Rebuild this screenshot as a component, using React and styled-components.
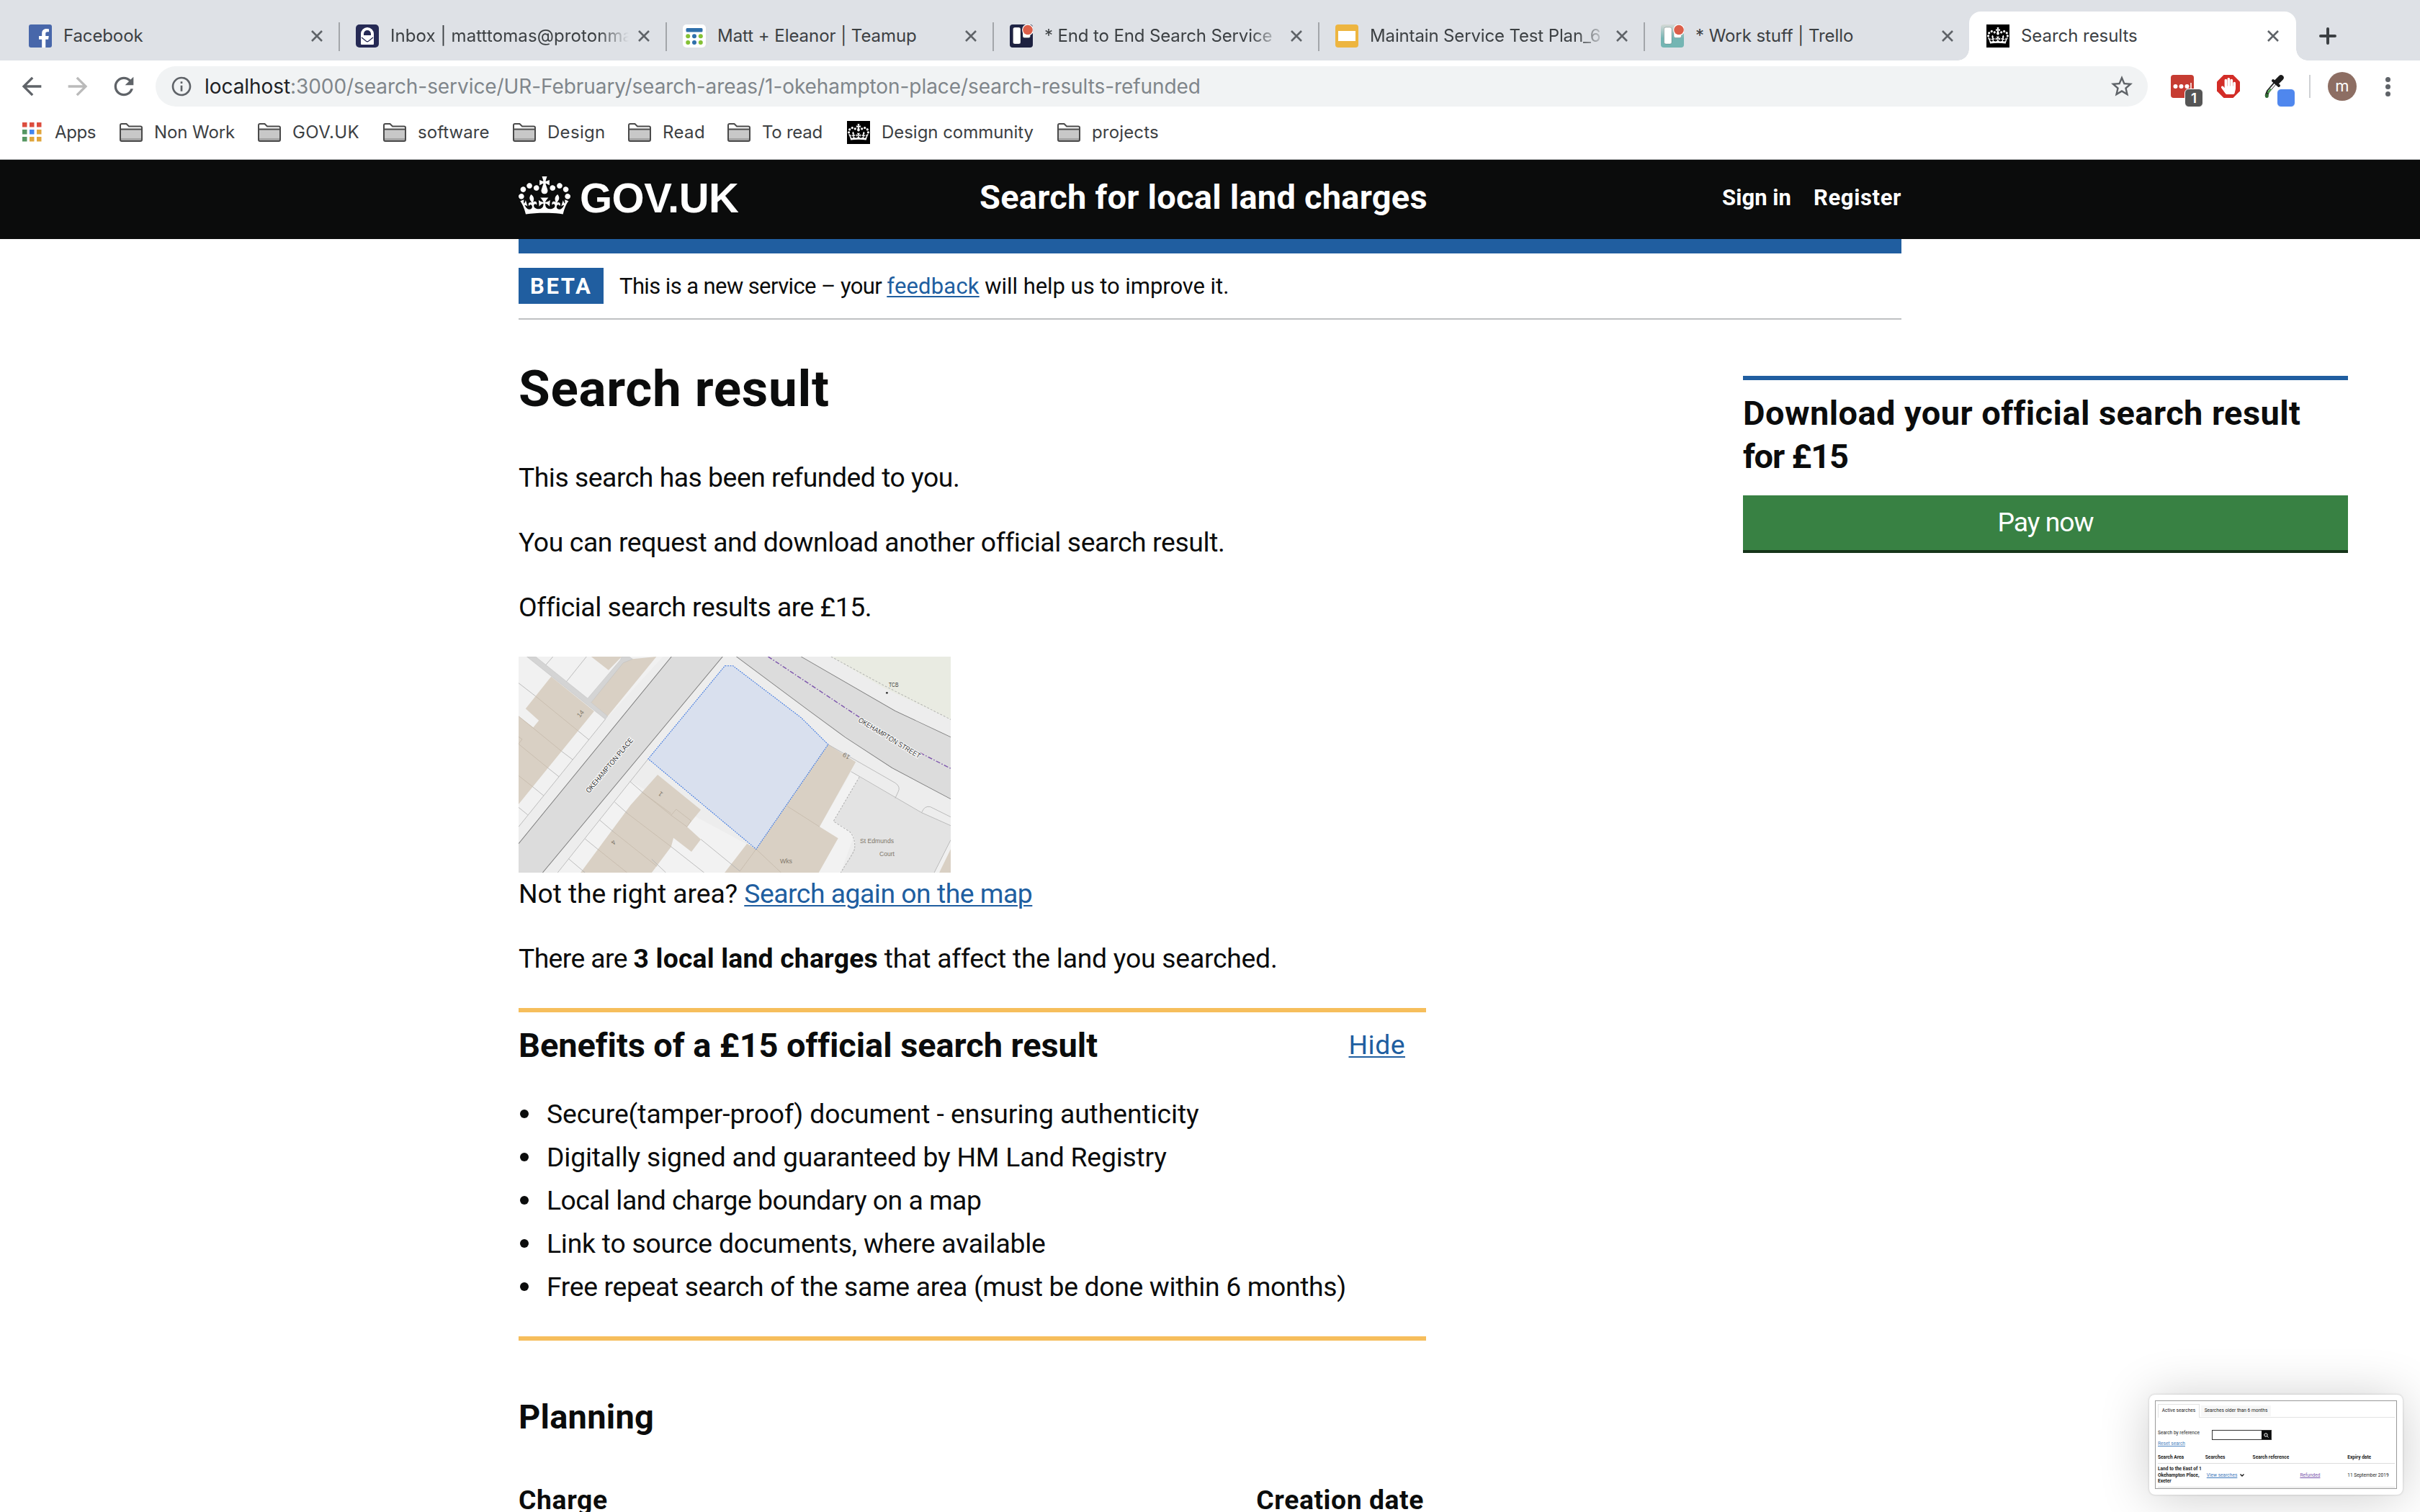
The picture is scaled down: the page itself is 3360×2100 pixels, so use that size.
import React from "react";
import styled, { createGlobalStyle, css } from "styled-components";
import { FaFacebookF, FaHandPaper } from "react-icons/fa";
import { MdArrowBack, MdArrowForward, MdRefresh, MdInfoOutline, MdStarBorder } from "react-icons/md";

const ui = `Inter, "Liberation Sans", sans-serif`;
const transport = `Roboto, "Liberation Sans", sans-serif`;
const ink = "#0b0c0c";
const blue = "#205ea0";

const GlobalStyle = createGlobalStyle`
  html, body { margin: 0; background: #fff; }
  * { box-sizing: border-box; }
  svg { display: block; flex: none; }
`;

const Screen = styled.div`
  position: relative;
  width: 3360px;
  height: 2100px;
  overflow: hidden;
  background: #fff;
`;

/* ---------- browser window ---------- */
const TabStrip = styled.div`
  display: flex;
  align-items: flex-end;
  height: 84px;
  padding-left: 16px;
  background: #dee1e6;
`;

const Tab = styled.div`
  position: relative;
  display: flex;
  align-items: center;
  width: ${(p) => p.$width}px;
  height: 68px;
  padding: 0 ${(p) => (p.$active ? 24 : 22)}px 0 24px;
  border-radius: 16px 16px 0 0;
  ${(p) =>
    p.$divided &&
    css`
      &::before {
        content: "";
        position: absolute;
        left: 0;
        top: 15px;
        width: 2px;
        height: 40px;
        background: #a3a6aa;
      }
    `}
  ${(p) =>
    p.$active &&
    css`
      background: #fff;
      &::before,
      &::after {
        content: "";
        position: absolute;
        bottom: 0;
        width: 16px;
        height: 16px;
      }
      &::before {
        left: -16px;
        background: radial-gradient(circle at 0 0, transparent 15.5px, #fff 16px);
      }
      &::after {
        right: -16px;
        background: radial-gradient(circle at 100% 0, transparent 15.5px, #fff 16px);
      }
    `}
`;

const TabTitle = styled.span`
  flex: 1;
  min-width: 0;
  margin: 0 13px 0 16px;
  overflow: hidden;
  white-space: nowrap;
  font: 400 24px/36px ${ui};
  letter-spacing: ${(p) => p.$ls || 0}px;
  color: #3c4043;
  ${(p) => p.$fade && css`mask-image: linear-gradient(90deg, #000 calc(100% - 42px), transparent);`}
`;

const NewTab = styled.div`
  display: flex;
  align-items: center;
  height: 68px;
  margin-left: 32px;
`;

const Toolbar = styled.div`
  display: flex;
  align-items: center;
  height: 72px;
  padding-left: 24px;
  color: #5f6368;
`;

const NavButton = styled.div`
  display: flex;
  width: 40px;
  height: 40px;
  margin-right: 24px;
  font-size: 40px;
  color: ${(p) => (p.$disabled ? "#bababa" : "#5f6368")};
`;

const AddressBar = styled.div`
  display: flex;
  align-items: center;
  width: 2766px;
  height: 56px;
  padding: 0 18px 0 20px;
  border-radius: 28px;
  background: #f1f3f4;
`;

const Url = styled.div`
  flex: 1;
  margin-left: 16px;
  font: 400 28px/40px ${ui};
  letter-spacing: -0.07px;
  color: #80868b;
  white-space: nowrap;
`;

const UrlHost = styled.span`
  color: #202124;
`;

const Extension = styled.div`
  position: relative;
  width: 32px;
  height: 32px;
  margin-left: 32px;
`;

const ExtensionBadge = styled.div`
  position: absolute;
  left: ${(p) => p.$left}px;
  top: 19px;
  width: 26px;
  height: 26px;
  border: 1px solid #fff;
  border-radius: 6px;
  background: ${(p) => p.$color};
  font: 600 19px/25px ${ui};
  text-align: center;
  color: #fff;
`;

const ToolDivider = styled.div`
  width: 2px;
  height: 32px;
  margin: 0 24px 0 32px;
  background: #cfd1d4;
`;

const Avatar = styled.div`
  width: 40px;
  height: 40px;
  border-radius: 50%;
  background: #8d6e63;
  font: 400 22px/38px ${ui};
  text-align: center;
  color: #fff;
`;

const MenuDots = styled.div`
  display: flex;
  flex-direction: column;
  gap: 3px;
  margin-left: 40px;
`;

const Dot = styled.i`
  width: 7px;
  height: 7px;
  border-radius: 50%;
  background: #5f6368;
`;

const BookmarkBar = styled.div`
  display: flex;
  align-items: center;
  height: 65px;
  padding: 0 0 9px 28px;
`;

const BookmarkItem = styled.div`
  display: flex;
  align-items: center;
  width: ${(p) => p.$width}px;
  gap: 16px;
  font: 400 24px/36px ${ui};
  letter-spacing: ${(p) => p.$ls || 0}px;
  color: #3c4043;
  white-space: nowrap;
`;

/* ---------- page ---------- */
const Header = styled.header`
  display: flex;
  justify-content: center;
  height: 111px;
  border-top: 1px solid #b5b7b9;
  background: ${ink};
`;

const HeaderInner = styled.div`
  display: flex;
  width: 1920px;
  color: #fff;
  white-space: nowrap;
`;

const Brand = styled.div`
  display: flex;
  width: 640px;
  padding-top: 23px;
  gap: 13px;
`;

const BrandName = styled.span`
  font: 700 58px/60px "Liberation Sans", Arial, sans-serif;
  letter-spacing: -0.5px;
`;

const ServiceName = styled.span`
  margin-top: 22px;
  font: 700 47px/60px ${transport};
  letter-spacing: 0.24px;
`;

const HeaderNav = styled.nav`
  display: flex;
  gap: 31px;
  margin: 33px 0 0 auto;
  font: 700 31px/40px ${transport};
`;

const HeaderLink = styled.span`
  letter-spacing: ${(p) => p.$ls}px;
`;

const Container = styled.div`
  width: 1920px;
  margin: 0 auto;
`;

const PhaseBanner = styled.div`
  display: flex;
  height: 112px;
  padding: 20px 0;
  border-top: 20px solid ${blue};
  border-bottom: 2px solid #bfc1c3;
  font: 400 31px/51px ${transport};
  color: ${ink};
  white-space: nowrap;
`;

const PhaseTag = styled.strong`
  width: 118px;
  height: 50px;
  margin-right: 22px;
  padding-left: 16px;
  background: ${blue};
  color: #fff;
  font-weight: 700;
  letter-spacing: 2.63px;
`;

const Spaced = styled.span`
  letter-spacing: ${(p) => p.$ls}px;
`;

const Strong = styled.strong`
  font-weight: 700;
  letter-spacing: ${(p) => p.$ls}px;
`;

const Link = styled.a`
  color: ${blue};
  letter-spacing: ${(p) => p.$ls}px;
  text-decoration: underline;
  text-decoration-thickness: 2px;
  text-underline-offset: 3px;
`;

const Columns = styled.div`
  display: flex;
  gap: 440px;
  padding-top: 56px;
`;

const Main = styled.main`
  flex: none;
  width: 1260px;
  color: ${ink};
  font: 400 37.3px/60px ${transport};
  white-space: nowrap;
`;

const PageTitle = styled.h1`
  margin: 0 0 53px;
  font: 700 71px/80px ${transport};
  letter-spacing: 0.71px;
`;

const Paragraph = styled.p`
  margin: 0 0 30px;
  letter-spacing: ${(p) => p.$ls || 0}px;
`;

const MapFigure = styled.div`
  width: 600px;
  height: 300px;
  margin: 39px 0 -1px;
  overflow: hidden;
`;

const Benefits = styled.section`
  height: 462px;
  margin-top: 39px;
  padding-top: 16px;
  border-top: 6px solid #f6be5c;
  border-bottom: 6px solid #f6be5c;
`;

const BenefitsHead = styled.div`
  display: flex;
  justify-content: space-between;
  padding-right: 29px;
`;

const Heading2 = styled.h2`
  margin: 0;
  font: 700 47px/60px ${transport};
  letter-spacing: ${(p) => p.$ls}px;
`;

const HideLink = styled(Link)`
  position: relative;
  top: -1px;
`;

const BenefitList = styled.ul`
  margin: 35px 0 0;
  padding: 0;
  list-style: none;
`;

const Benefit = styled.li`
  display: flex;
  align-items: center;
  gap: 25px;
  height: 60px;
  padding-left: 2px;
  letter-spacing: ${(p) => p.$ls}px;
  &::before {
    content: "";
    width: 12px;
    height: 12px;
    border-radius: 50%;
    background: ${ink};
  }
`;

const PlanningTitle = styled(Heading2)`
  margin-top: 76px;
`;

const TableHead = styled.div`
  display: flex;
  justify-content: space-between;
  margin-top: 55px;
  padding-right: 3px;
  font-weight: 700;
`;

const Aside = styled.aside`
  flex: none;
  width: 840px;
  margin-top: 22px;
  padding-top: 16px;
  border-top: 6px solid ${blue};
  align-self: flex-start;
  color: ${ink};
`;

const PayButton = styled.button`
  display: block;
  width: 100%;
  height: 80px;
  margin-top: 24px;
  padding: 0 0 1px;
  border: 0;
  border-bottom: 4px solid #153419;
  background: #388143;
  color: #fff;
  font: 400 37.3px/75px ${transport};
  letter-spacing: -1px;
`;

/* ---------- floating preview ---------- */
const Preview = styled.div`
  position: absolute;
  left: 2984px;
  top: 1937px;
  width: 352px;
  height: 139px;
  padding: 8px;
  border-radius: 8px;
  background: #fff;
  box-shadow: 0 0 3px rgba(0, 0, 0, 0.22), 0 4px 70px rgba(0, 0, 0, 0.2);
`;

const PreviewFrame = styled.div`
  height: 123px;
  padding: 4px 2px 0 3px;
  border: 1px solid #999;
  font: 400 6.6px/9px ${transport};
  color: #222;
  white-space: nowrap;
`;

const PreviewTabs = styled.div`
  display: flex;
  align-items: flex-end;
  gap: 2px;
  height: 19px;
  border-bottom: 1px solid #e3e3e3;
`;

const PreviewTab = styled.div`
  width: ${(p) => p.$width}px;
  height: ${(p) => (p.$current ? 19 : 15)}px;
  margin-bottom: ${(p) => (p.$current ? -1 : 1)}px;
  padding-top: ${(p) => (p.$current ? 4 : 3)}px;
  text-align: center;
  background: ${(p) => (p.$current ? "#fff" : "#f7f7f7")};
  border: ${(p) => (p.$current ? "1px solid #e3e3e3" : "0")};
  border-bottom: 0;
`;

const PreviewSearch = styled.div`
  display: flex;
  height: 15px;
  margin-top: 17px;
`;

const PreviewLabel = styled.span`
  width: 75px;
`;

const PreviewInput = styled.span`
  display: flex;
  justify-content: flex-end;
  width: 83px;
  height: 14px;
  border: 1px solid #333;
`;

const PreviewSearchButton = styled.span`
  display: flex;
  align-items: center;
  justify-content: center;
  width: 13px;
  background: ${ink};
`;

const PreviewReset = styled.div`
  color: #4a82c0;
  text-decoration: underline;
`;

const PreviewRow = styled.div`
  display: grid;
  grid-template-columns: repeat(5, 65.8px);
  align-items: center;
  height: ${(p) => p.$height}px;
  margin-top: ${(p) => p.$top || 0}px;
  border-bottom: 1px solid #ddd;
  font-weight: ${(p) => (p.$head ? 700 : 400)};
`;

const PreviewArea = styled.strong`
  line-height: 8.6px;
  white-space: pre-line;
`;

const PreviewLink = styled.span`
  display: flex;
  align-items: center;
  gap: 4px;
  color: ${(p) => p.$color};
  padding-left: ${(p) => p.$indent || 0}px;
  text-decoration: underline;
`;

/* ---------- icons ---------- */
const CROWN =
  "M25 30.2c3.5 1.5 7.7-.2 9.1-3.7 1.5-3.6-.2-7.8-3.9-9.2-3.6-1.4-7.6.3-9.1 3.9-1.4 3.5.3 7.5 3.9 9zM9 39.5c3.6 1.5 7.8-.2 9.2-3.7 1.5-3.6-.2-7.8-3.9-9.1-3.6-1.5-7.6.2-9.1 3.8-1.4 3.5.3 7.5 3.8 9zM4.4 57.2c3.5 1.5 7.7-.2 9.1-3.8 1.5-3.6-.2-7.7-3.9-9.1-3.5-1.5-7.6.3-9.1 3.8-1.4 3.5.3 7.6 3.9 9.1zm38.3-21.4c3.5 1.5 7.7-.2 9.1-3.8 1.5-3.6-.2-7.7-3.9-9.1-3.6-1.5-7.6.3-9.1 3.8-1.3 3.6.4 7.7 3.9 9.1zm64.4-5.6c-3.6 1.5-7.8-.2-9.1-3.7-1.5-3.6.2-7.8 3.8-9.2 3.6-1.4 7.7.3 9.2 3.9 1.3 3.5-.4 7.5-3.9 9zm15.9 9.3c-3.6 1.5-7.7-.2-9.1-3.7-1.5-3.6.2-7.8 3.7-9.1 3.6-1.5 7.7.2 9.2 3.8 1.5 3.5-.3 7.5-3.8 9zm4.7 17.7c-3.6 1.5-7.8-.2-9.2-3.8-1.5-3.6.2-7.7 3.9-9.1 3.6-1.5 7.7.3 9.2 3.8 1.3 3.5-.4 7.6-3.9 9.1zM89.3 35.8c-3.6 1.5-7.8-.2-9.2-3.8-1.4-3.6.2-7.7 3.9-9.1 3.6-1.5 7.7.3 9.2 3.8 1.4 3.6-.3 7.7-3.9 9.1zM69.7 17.7l8.9 4.7V9.3l-8.9 2.8c-.2-.3-.5-.6-.9-.9L72.4 0H59.6l3.5 11.2c-.3.3-.6.5-.9.9l-8.8-2.8v13.1l8.8-4.7c.3.3.6.7.9.9l-5 15.4v.1c-.2.8-.4 1.6-.4 2.4 0 4.1 3.1 7.5 7 8.1h.2c.3 0 .7.1 1 .1.4 0 .7 0 1-.1h.2c4-.6 7.1-4.1 7.1-8.1 0-.8-.1-1.7-.4-2.4V34l-5.1-15.4c.4-.2.7-.6 1-.9zM66 92.8c16.9 0 32.8 1.1 47.1 3.2 4-16.9 8.9-26.7 14-33.5l-9.6-3.4c1 4.9 1.1 7.2 0 10.2-1.5-1.4-3-4.3-4.2-8.7L108.6 76c2.8-2 5-3.2 7.5-3.3-4.4 9.4-10 11.9-13.6 11.2-4.3-.8-6.3-4.6-5.6-7.9 1-4.7 5.7-5.9 8-.5 4.3-8.7-3-11.4-7.6-8.8 7.1-7.2 7.9-13.5 2.1-21.1-8 6.1-8.1 12.3-4.5 20.8-4.7-5.4-12.1-2.5-9.5 6.2 3.4-5.2 7.9-2 7.2 3.1-.6 4.3-6.4 7.8-13.5 7.2-10.3-.9-10.9-8-11.2-13.8 2.5-.5 7.1 1.8 11 7.3L80.2 60c-4.1 4.4-8 5.3-12.3 5.4 1.4-4.4 8-11.6 8-11.6H55.5s6.4 7.2 7.9 11.6c-4.2-.1-8-1-12.3-5.4l1.4 16.4c3.9-5.5 8.5-7.7 10.9-7.3-.3 5.8-.9 12.8-11.1 13.8-7.2.6-12.9-2.9-13.5-7.2-.7-5 3.8-8.3 7.1-3.1 2.7-8.7-4.6-11.6-9.4-6.2 3.7-8.5 3.6-14.7-4.6-20.8-5.8 7.6-5 13.9 2.2 21.1-4.7-2.6-11.9.1-7.7 8.8 2.3-5.5 7.1-4.2 8.1.5.7 3.3-1.3 7.1-5.7 7.9-3.5.7-9-1.8-13.5-11.2 2.5.1 4.7 1.3 7.5 3.3l-4.7-15.4c-1.2 4.4-2.7 7.2-4.3 8.7-1.1-3-.9-5.3 0-10.2l-9.5 3.4c5 6.9 9.9 16.7 14 33.5 14.8-2.1 30.8-3.2 47.7-3.2z";

const CrownIcon = () => (
  <svg width="72" height="53" viewBox="0 0 132 97" fill="#fff">
    <path d={CROWN} />
  </svg>
);

const CrownTile = () => (
  <svg width="32" height="32" viewBox="0 0 32 32">
    <rect width="32" height="32" fill="#000" />
    <g transform="translate(1 4) scale(.227 .235)" fill="#fff">
      <path d={CROWN} />
    </g>
  </svg>
);

const FacebookTile = () => (
  <svg width="32" height="32" viewBox="0 0 32 32">
    <rect width="32" height="32" rx="3" fill="#4867aa" />
    <FaFacebookF x="8" y="6" size={26} color="#fff" />
  </svg>
);

const ProtonTile = () => (
  <svg width="32" height="32" viewBox="0 0 32 32">
    <rect width="32" height="32" rx="5" fill="#262a55" />
    <path d="M7 27V13a9 9 0 0 1 18 0v14a1 1 0 0 1-1 1H8a1 1 0 0 1-1-1z" fill="#fff" />
    <path d="M11 15v-2a5 5 0 0 1 10 0v2z" fill="#262a55" />
    <path d="M8 18l6.500 5.200a2.500 2.500 0 0 0 3 0L24 18" fill="none" stroke="#262a55" strokeWidth="1.300" />
  </svg>
);

const TeamupTile = () => (
  <svg width="32" height="32" viewBox="0 0 32 32">
    <rect width="32" height="32" rx="5" fill="#fff" />
    <rect x="4.500" y="5" width="23" height="5.500" rx="1.500" fill="#2f70ab" />
    {[7.2, 16, 24.8].map((x, i) =>
      [16.300, 25].map((y) => <circle key={x + y} cx={x} cy={y} r="3" fill={i === 1 ? "#2f70ab" : "#84c135"} />)
    )}
  </svg>
);

const TrelloTile = ({ sky, ground }) => (
  <svg width="32" height="32" viewBox="0 0 32 32">
    <defs>
      <linearGradient id={"board" + ground.slice(1)} x1="0" y1="0" x2="0" y2="1">
        <stop offset="0" stopColor={sky} />
        <stop offset="0.6" stopColor={ground} />
      </linearGradient>
    </defs>
    <rect width="32" height="32" rx="4" fill={`url(#board${ground.slice(1)})`} />
    <rect x="4.500" y="4" width="10.500" height="23" rx="2.500" fill="#fff" stroke="#0003" />
    <rect x="18" y="4" width="10.500" height="14.500" rx="2.500" fill="#fff" stroke="#0003" />
    <circle cx="25" cy="7.500" r="8" fill="#fff" />
    <circle cx="25" cy="7.500" r="6.800" fill="#dc5f4a" />
  </svg>
);

const SlidesTile = () => (
  <svg width="32" height="32" viewBox="0 0 32 32">
    <rect width="32" height="32" rx="4" fill="#edb540" />
    <rect x="4" y="9" width="24" height="14" fill="#fff" />
  </svg>
);

const CloseIcon = () => (
  <svg width="16" height="16" viewBox="0 0 16 16" stroke="#5f6368" strokeWidth="2.600">
    <path d="M1 1l14 14M15 1L1 15" />
  </svg>
);

const PlusIcon = () => (
  <svg width="24" height="24" viewBox="0 0 24 24" stroke="#3c4043" strokeWidth="4" strokeLinecap="round">
    <path d="M12 2v20M2 12h20" />
  </svg>
);

const FolderIcon = () => (
  <svg width="32" height="26" viewBox="0 0 32 26">
    <path d="M1 23V3a2 2 0 0 1 2-2h6.500l3.500 3.500H29a2 2 0 0 1 2 2V23a2 2 0 0 1-2 2H3a2 2 0 0 1-2-2z" fill="#fff" />
    <path d="M2 9h28v15H2z" fill="#c8c8c8" />
    <path d="M2 21h28v3H2z" fill="#a5a5a5" />
    <path d="M1 8.500h30" stroke="#4a4a4a" strokeWidth="2" />
    <path
      d="M1 23V3a2 2 0 0 1 2-2h6.500l3.500 3.500H29a2 2 0 0 1 2 2V23a2 2 0 0 1-2 2H3a2 2 0 0 1-2-2z"
      fill="none" stroke="#4a4a4a" strokeWidth="2"
    />
  </svg>
);

const APP_COLORS = ["#dc4d3e", "#dc4d3e", "#dc4d3e", "#559662", "#4285f0", "#e0a53c", "#559662", "#e0a53c", "#e0a53c"];
const AppsIcon = () => (
  <svg width="32" height="32" viewBox="0 0 32 32">
    {APP_COLORS.map((c, i) => (
      <rect key={i} x={3 + (i % 3) * 10} y={2 + Math.floor(i / 3) * 10} width="6.500" height="6.500" fill={c} />
    ))}
  </svg>
);

const PasswordIcon = () => (
  <svg width="32" height="32" viewBox="0 0 32 32">
    <rect width="32" height="32" rx="4" fill="#c63c32" />
    <circle cx="6.500" cy="16" r="3" fill="#fff" />
    <circle cx="14.500" cy="16" r="3" fill="#fff" />
    <circle cx="22.500" cy="16" r="3" fill="#fff" />
    <path d="M28 11v10" stroke="#fff" strokeWidth="1.500" />
  </svg>
);

const BlockerIcon = () => (
  <svg width="32" height="32" viewBox="0 0 32 32">
    <path d="M9.500 0h13L32 9.500v13L22.500 32h-13L0 22.500v-13z" fill="#d32d27" />
    <FaHandPaper x="4.500" y="4" size={23} color="#fff" />
  </svg>
);

const DropperIcon = () => (
  <svg width="32" height="32" viewBox="0 0 32 32">
    <path d="M18 10L7 23l-2 5" stroke="#222" strokeWidth="4.500" fill="none" strokeLinecap="round" />
    <path d="M17.500 11.500L7.500 23" stroke="#fff" strokeWidth="2" />
    <path d="M11 19.500L6.500 25" stroke="#4aa04a" strokeWidth="2.500" />
    <ellipse cx="5.300" cy="29" rx="2.500" ry="3" fill="#2f6a33" />
    <path d="M14 8l8 7" stroke="#1b1b1b" strokeWidth="4" strokeLinecap="round" />
    <path d="M19.500 9.500L25 4" stroke="#1b1b1b" strokeWidth="7.500" strokeLinecap="round" />
  </svg>
);

const AreaMap = () => (
  <svg width="600" height="300" viewBox="0 0 600 300">
    <rect width="600" height="300" fill="#ededed" />
    <g transform="scale(.40816 .33333) translate(-49 -36)" fill="none" stroke="none">
      <path d="M49 36H540L345 298 49 745z" fill="#f1f1f1" />
      <path d="M428 556L860 840 1070 936H180z M1200 475L1180 515 1208 538 1120 722 1190 780 1145 936H1060L1136 793 1073 745z" fill="#f2f2f2" />
      <path d="M1112 36H1519V298L1290 165z" fill="#e9ebe2" />
      <path d="M569 36H743L131 936H49V815z" fill="#dcdcdc" />
      <path d="M790 36H1010L1330 262 1519 371V629L1320 500 1160 372 1030 255z" fill="#dcdcdc" />
      <path d="M160 119L306 263 49 651V284L99 331 118 302 73 253z M296 36H400L355 92z M437 46L518 36 352 284 296 227 400 60z" fill="#d9d0c4" />
      <path d="M77 36H107L284 210 395 50 400 36H425L437 46 405 62 296 227 352 284 344 297z" fill="#d4d4d4" stroke="#b3b3b3" />
      <path d="M1519 800V936H1463z" fill="#f0f0f0" />
      <path d="M1519 838V936H1480z" fill="#d9d0c4" />
      <path d="M522 528L669 674 622 745 669 797 637 849 576 791 568 828 502 936H260L430 655z" fill="#d9d0c4" />
      <path d="M1102 402L1196 475 1073 745 1136 793 1070 936H750L826 815 857 838z" fill="#d9d0c4" />
      <path d="M1208 538L1420 686 1519 740V800L1463 936H1145C1180 860 1195 840 1194 812 1192 770 1175 758 1120 722z" fill="#e3e3e3" />
      <path d="M569 36L49 815M743 36L131 936M790 36L1030 255 1160 372 1320 500 1519 629M1010 36L1330 262 1519 371" stroke="#7d7d7d" strokeWidth="2.500" />
      <g stroke="#b0b0b0" strokeWidth="2.200">
        <path d="M344 297L49 745M490 462L182 936M166 36L142 70M280 36L212 140M49 146L106 200M252 346L289 383M196 431L233 465M149 500L186 536M97 578L134 615M49 664L80 695M428 556L473 604M376 642L420 690M325 717L372 766M275 795L320 840M219 878L275 936M568 828L680 936M502 880L550 936M669 797L802 930M1102 402L1330 562Q1350 578 1340 600L1330 626M1180 515L1420 686 1519 740M1420 686Q1430 655 1450 662L1519 704M1519 800L1463 936" />
      </g>
      <g stroke="#c3b7a8" strokeWidth="2">
        <path d="M106 200L252 346M49 284L196 431M49 400L149 500M49 532L97 578M473 604L568 690M473 604L568 697M420 690L568 828M372 766L520 910M320 840L418 936M568 697L585 672 636 720 622 745z M964 660L1073 745M857 838L942 936M857 838L802 930M49 370L61 380 49 400" />
      </g>
      <path d="M1112 36L1290 155 1519 298M1208 538L1120 722 1175 765C1195 790 1195 830 1190 845 1180 870 1160 905 1145 936" stroke="#adadad" strokeWidth="2.500" strokeDasharray="7 6" />
      <path d="M898 36L1208 288M1415 437L1519 502" stroke="#7d55ad" strokeWidth="4" strokeDasharray="16 6 4 6" />
      <path d="M751 74H778L1010 290 1102 402 857 838 490 462z" fill="#d9e0ee" stroke="#3e78e0" strokeWidth="3" strokeDasharray="5 3.500" />
      <ellipse cx="1302" cy="187" rx="3.500" ry="4" fill="#333" />
    </g>
    <g fontFamily='"Liberation Sans", sans-serif' fontSize="9" fill="#80776a" stroke="none">
      <text transform="translate(98 190) rotate(-50)" fontSize="10" fill="#333" stroke="#fff" strokeWidth="2" paintOrder="stroke" textLength="96" lengthAdjust="spacingAndGlyphs">OKEHAMPTON PLACE</text>
      <text transform="translate(471 90) rotate(31.400)" fontSize="10" fill="#333" stroke="#fff" strokeWidth="2" paintOrder="stroke" textLength="99" lengthAdjust="spacingAndGlyphs">OKEHAMPTON STREET</text>
      <text x="514" y="41.500" fontSize="8.500" fill="#444" textLength="13.500" lengthAdjust="spacingAndGlyphs">TCB</text>
      <text x="474" y="258.500" textLength="47" lengthAdjust="spacingAndGlyphs">St Edmunds</text>
      <text x="501" y="276.500" textLength="21" lengthAdjust="spacingAndGlyphs">Court</text>
      <text x="363" y="286.500" textLength="17" lengthAdjust="spacingAndGlyphs">Wks</text>
      <text transform="translate(85 85) rotate(-50)">14</text>
      <text transform="translate(461 138) rotate(212)">19</text>
      <text transform="translate(201 190) rotate(-140)">1</text>
      <text transform="translate(131 254) rotate(130)">4</text>
    </g>
  </svg>
);

/* ---------- data ---------- */
const TABS = [
  { title: "Facebook", icon: <FacebookTile />, width: 454, ls: -0.12 },
  { title: "Inbox | matttomas@protonmail.com", icon: <ProtonTile />, width: 454, ls: 0.1, divided: true, fade: true },
  { title: "Matt + Eleanor | Teamup", icon: <TeamupTile />, width: 454, ls: -0.05, divided: true },
  { title: "* End to End Search Service", icon: <TrelloTile sky="#1f2547" ground="#1d2140" />, width: 452, ls: -0.13, divided: true, fade: true },
  { title: "Maintain Service Test Plan_6", icon: <SlidesTile />, width: 452, ls: -0.14, divided: true, fade: true },
  { title: "* Work stuff | Trello", icon: <TrelloTile sky="#d5d9d6" ground="#74b5b3" />, width: 452, ls: -0.07, divided: true },
  { title: "Search results", icon: <CrownTile />, width: 454, ls: -0.05, active: true },
];

const BOOKMARKS = [
  { label: "Apps", icon: <AppsIcon />, width: 138, ls: -0.4 },
  { label: "Non Work", width: 192, ls: -0.09 },
  { label: "GOV.UK", width: 174, ls: 0.41 },
  { label: "software", width: 180, ls: 0.06 },
  { label: "Design", width: 160, ls: 0.3 },
  { label: "Read", width: 138, ls: 0.4 },
  { label: "To read", width: 166, ls: -0.27 },
  { label: "Design community", icon: <CrownTile />, width: 292, ls: -0.04 },
  { label: "projects", width: 150, ls: 0.16 },
];

const BENEFITS = [
  ["Secure(tamper-proof) document - ensuring authenticity", -0.08],
  ["Digitally signed and guaranteed by HM Land Registry", -0.2],
  ["Local land charge boundary on a map", -0.52],
  ["Link to source documents, where available", -0.22],
  ["Free repeat search of the same area (must be done within 6 months)", -0.34],
];

function Browser() {
  return (
    <>
      <TabStrip>
        {TABS.map((t) => (
          <Tab key={t.title} $width={t.width} $divided={t.divided} $active={t.active}>
            {t.icon}
            <TabTitle $ls={t.ls} $fade={t.fade}>{t.title}</TabTitle>
            <CloseIcon />
          </Tab>
        ))}
        <NewTab><PlusIcon /></NewTab>
      </TabStrip>
      <Toolbar>
        <NavButton><MdArrowBack /></NavButton>
        <NavButton $disabled><MdArrowForward /></NavButton>
        <NavButton><MdRefresh /></NavButton>
        <AddressBar>
          <MdInfoOutline size={32} />
          <Url><UrlHost>localhost</UrlHost>:3000/search-service/UR-February/search-areas/1-okehampton-place/search-results-refunded</Url>
          <MdStarBorder size={36} />
        </AddressBar>
        <Extension><PasswordIcon /><ExtensionBadge $left={19} $color="#555">1</ExtensionBadge></Extension>
        <Extension><BlockerIcon /></Extension>
        <Extension><DropperIcon /><ExtensionBadge $left={19} $color="#4f87ee" /></Extension>
        <ToolDivider />
        <Avatar>m</Avatar>
        <MenuDots><Dot /><Dot /><Dot /></MenuDots>
      </Toolbar>
      <BookmarkBar>
        {BOOKMARKS.map((b) => (
          <BookmarkItem key={b.label} $width={b.width} $ls={b.ls}>
            {b.icon || <FolderIcon />}
            {b.label}
          </BookmarkItem>
        ))}
      </BookmarkBar>
    </>
  );
}

function SearchPreview() {
  return (
    <Preview>
      <PreviewFrame>
        <PreviewTabs>
          <PreviewTab $current $width={58}>Active searches</PreviewTab>
          <PreviewTab $width={97}>Searches older than 6 months</PreviewTab>
        </PreviewTabs>
        <PreviewSearch>
          <PreviewLabel>Search by reference</PreviewLabel>
          <PreviewInput>
            <PreviewSearchButton>
              <svg width="7" height="7" viewBox="0 0 7 7" fill="none" stroke="#fff">
                <circle cx="3" cy="3" r="2.200" />
                <path d="M4.600 4.600L6.500 6.500" />
              </svg>
            </PreviewSearchButton>
          </PreviewInput>
        </PreviewSearch>
        <PreviewReset>Reset search</PreviewReset>
        <PreviewRow $head $height={17} $top={6}>
          <span>Search Area</span>
          <span>Searches</span>
          <span>Search reference</span>
          <span />
          <span>Expiry date</span>
        </PreviewRow>
        <PreviewRow $height={33}>
          <PreviewArea>{"Land to the East of 1\nOkehampton Place,\nExeter"}</PreviewArea>
          <PreviewLink $color="#3f7abb" $indent={2}>
            View searches
            <svg width="6" height="4" viewBox="0 0 6 4" fill="none" stroke="#111" strokeWidth="1.300">
              <path d="M.5.500L3 3 5.500.500" />
            </svg>
          </PreviewLink>
          <span />
          <PreviewLink $color="#7a55ab">Refunded</PreviewLink>
          <span>11 September 2019</span>
        </PreviewRow>
      </PreviewFrame>
    </Preview>
  );
}

export default function App() {
  return (
    <Screen>
      <GlobalStyle />
      <Browser />
      <Header>
        <HeaderInner>
          <Brand><CrownIcon /><BrandName>GOV.UK</BrandName></Brand>
          <ServiceName>Search for local land charges</ServiceName>
          <HeaderNav>
            <HeaderLink $ls={0.04}>Sign in</HeaderLink>
            <HeaderLink $ls={0.62}>Register</HeaderLink>
          </HeaderNav>
        </HeaderInner>
      </Header>
      <Container>
        <PhaseBanner>
          <PhaseTag>BETA</PhaseTag>
          <span>
            <Spaced $ls={-0.6}>This is a new service – your </Spaced>
            <Link $ls={0.18}>feedback</Link><Spaced $ls={-0.05}> will help us to improve it.</Spaced>
          </span>
        </PhaseBanner>
        <Columns>
          <Main>
            <PageTitle>Search result</PageTitle>
            <Paragraph $ls={-0.47}>This search has been refunded to you.</Paragraph>
            <Paragraph $ls={-0.38}>You can request and download another official search result.</Paragraph>
            <Paragraph $ls={-0.48}>Official search results are £15.</Paragraph>
            <MapFigure><AreaMap /></MapFigure>
            <Paragraph $ls={-0.1}>Not the right area? <Link $ls={-0.48}>Search again on the map</Link></Paragraph>
            <Paragraph $ls={-0.24}>
              <Spaced $ls={-0.6}>There are </Spaced>
              <Strong $ls={0.2}>3 local land charges</Strong> that affect the land you searched.
            </Paragraph>
            <Benefits>
              <BenefitsHead>
                <Heading2 $ls={-0.08}>Benefits of a £15 official search result</Heading2>
                <HideLink $ls={0.5}>Hide</HideLink>
              </BenefitsHead>
              <BenefitList>
                {BENEFITS.map(([text, ls]) => <Benefit key={text} $ls={ls}>{text}</Benefit>)}
              </BenefitList>
            </Benefits>
            <PlanningTitle $ls={0.23}>Planning</PlanningTitle>
            <TableHead>
              <Spaced $ls={0.63}>Charge</Spaced>
              <Spaced $ls={0.57}>Creation date</Spaced>
            </TableHead>
          </Main>
          <Aside>
            <Heading2 $ls={0.43}>Download your official search result</Heading2>
            <Heading2 $ls={-1.2}>for £15</Heading2>
            <PayButton>Pay now</PayButton>
          </Aside>
        </Columns>
      </Container>
      <SearchPreview />
    </Screen>
  );
}
